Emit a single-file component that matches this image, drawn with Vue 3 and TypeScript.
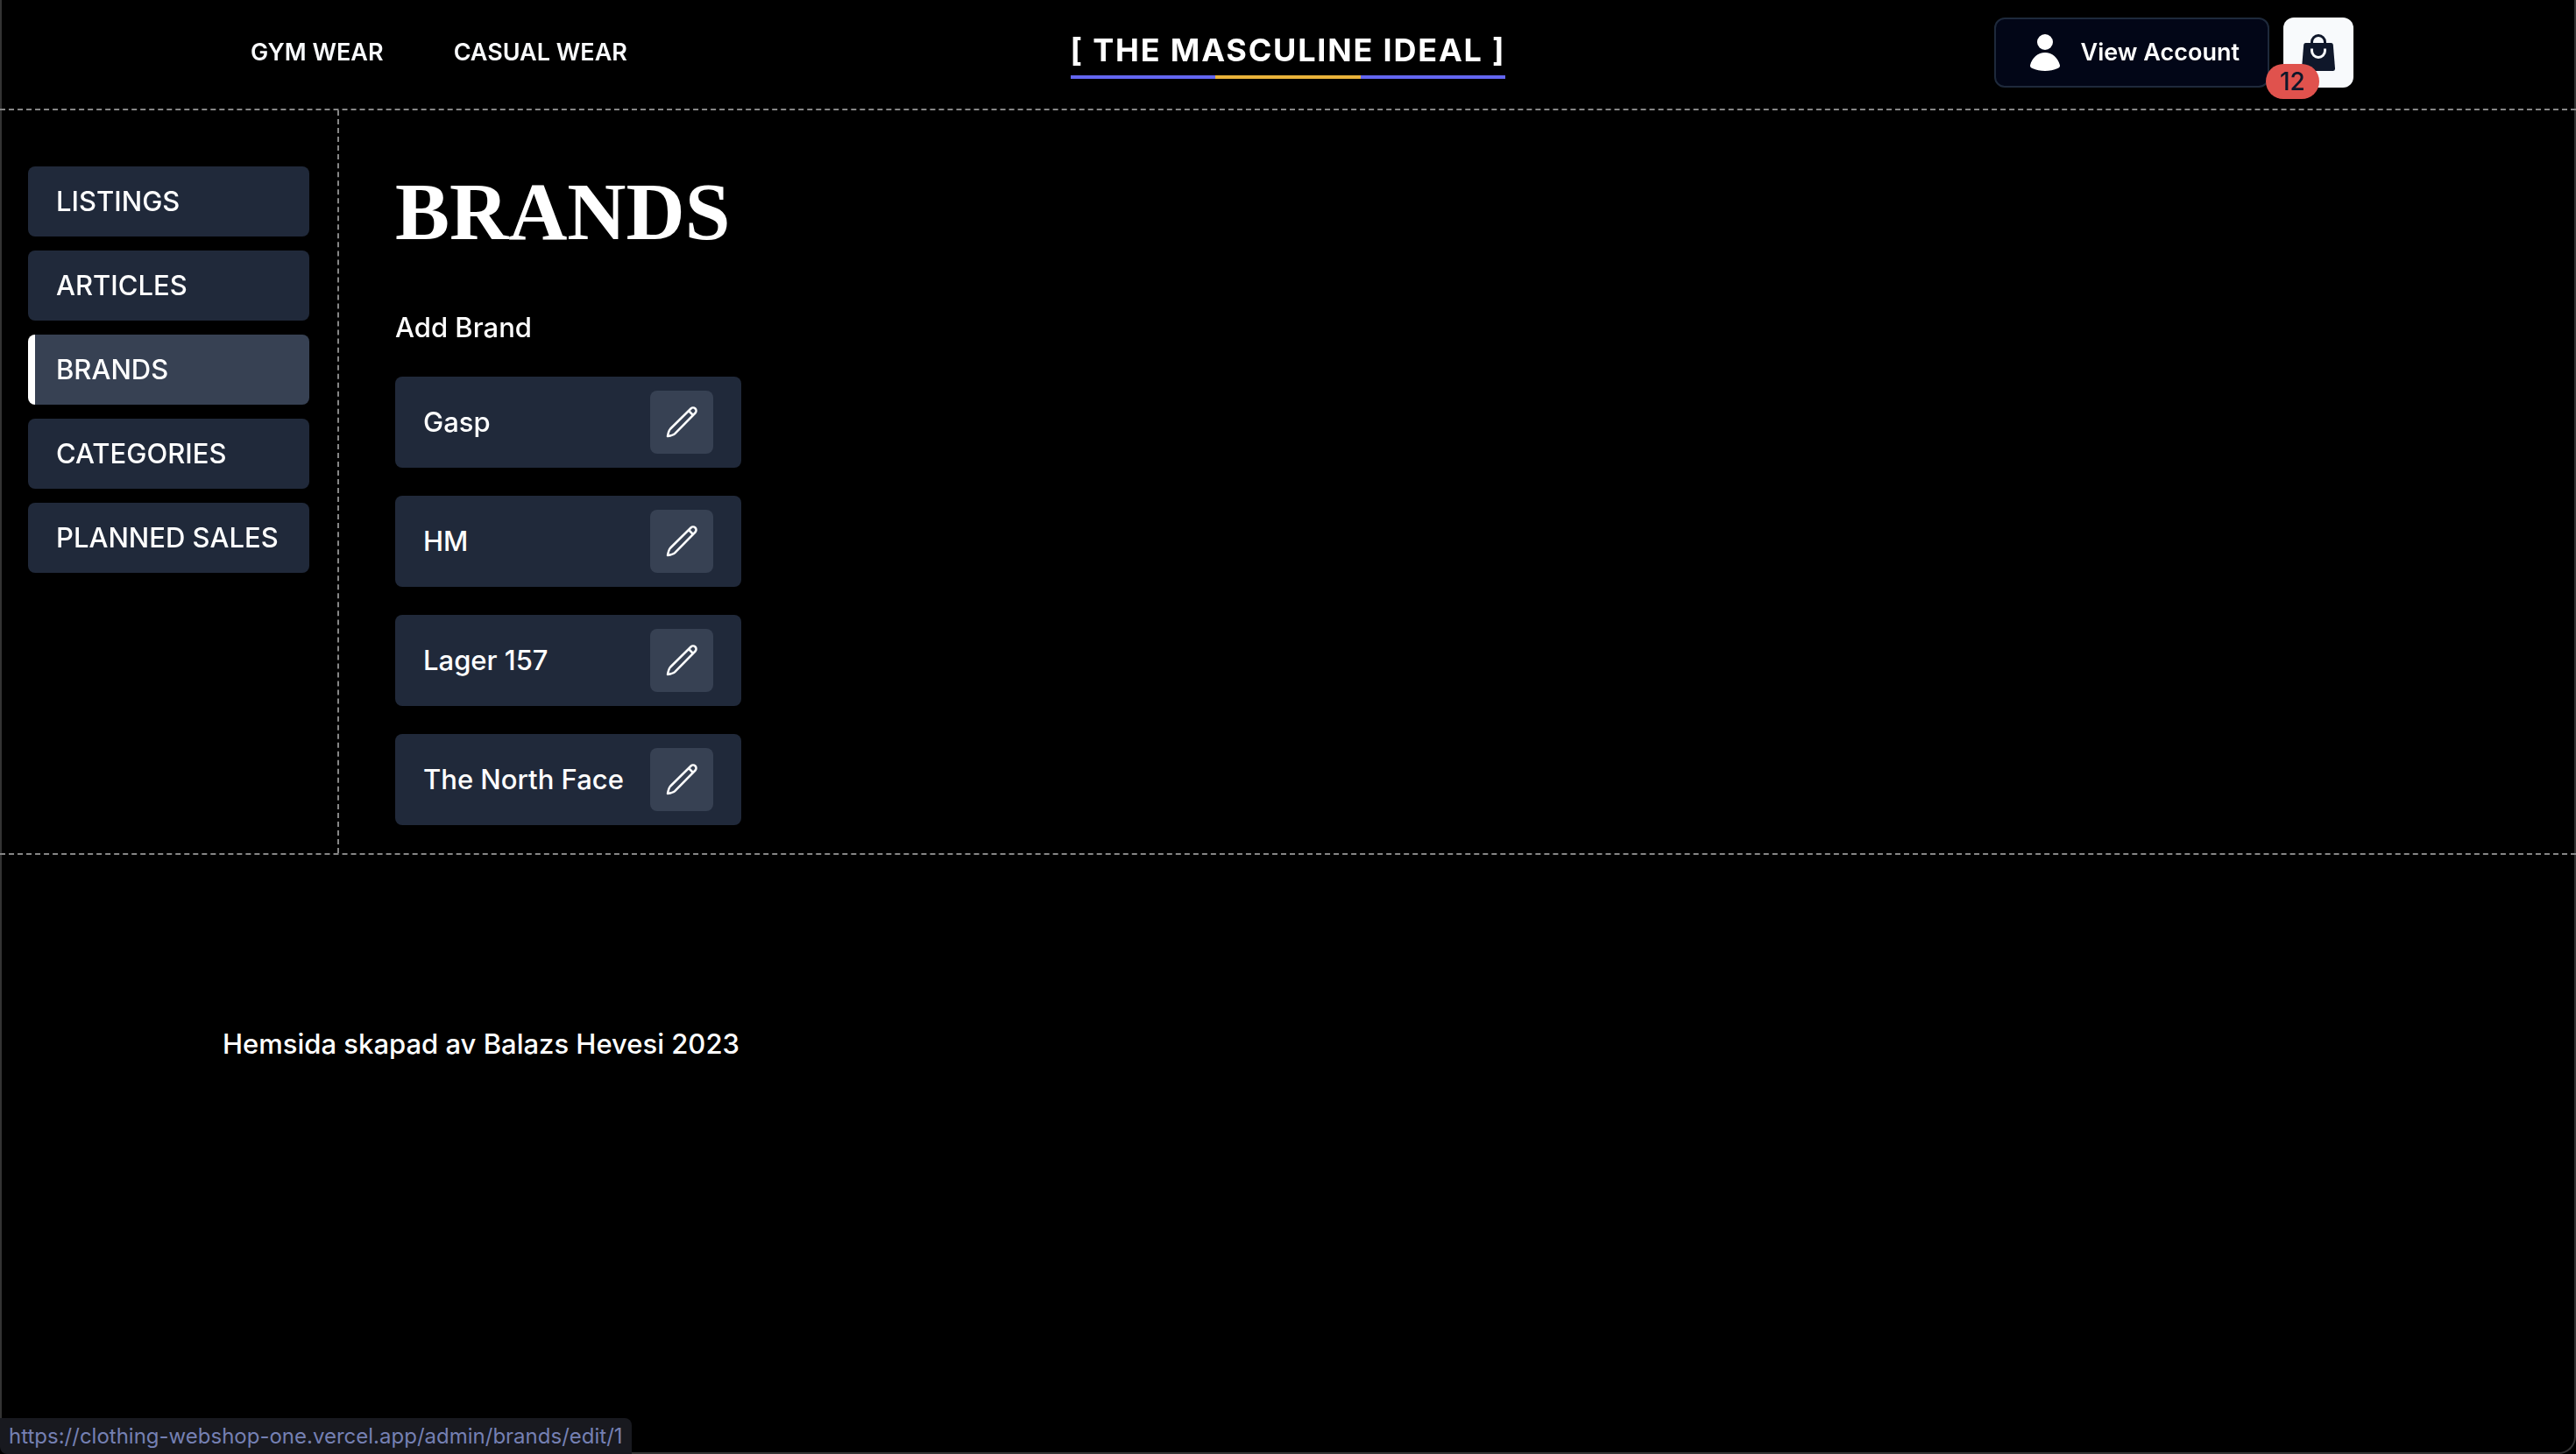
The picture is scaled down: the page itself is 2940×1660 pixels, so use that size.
<script setup lang="ts">
interface AdminLink {
  label: string
  href: string
  active?: boolean
}

interface Brand {
  id: number
  name: string
}

const adminLinks: AdminLink[] = [
  { label: 'LISTINGS', href: '/admin/listings' },
  { label: 'ARTICLES', href: '/admin/articles' },
  { label: 'BRANDS', href: '/admin/brands', active: true },
  { label: 'CATEGORIES', href: '/admin/categories' },
  { label: 'PLANNED SALES', href: '/admin/planned-sales' },
]

const brands: Brand[] = [
  { id: 1, name: 'Gasp' },
  { id: 2, name: 'HM' },
  { id: 3, name: 'Lager 157' },
  { id: 4, name: 'The North Face' },
]

const cartCount = 12
const hoveredUrl = 'https://clothing-webshop-one.vercel.app/admin/brands/edit/1'
</script>

<template>
  <div class="page">
    <div class="window-frame" aria-hidden="true"></div>

    <header class="header">
      <div class="container header-row">
        <nav class="nav" aria-label="Shop">
          <a class="nav-link" href="/gym-wear">GYM WEAR</a>
          <a class="nav-link" href="/casual-wear">CASUAL WEAR</a>
        </nav>
        <a class="logo" href="/">[ THE MASCULINE IDEAL ]</a>
        <div class="actions">
          <button class="account" type="button">
            <svg class="user-icon" viewBox="0 0 34 42" aria-hidden="true">
              <circle cx="17" cy="9" r="9" />
              <path d="M17 21C25 21 32 27 34 35.500C34.200 37 33 38.300 31.500 39C23 43 11 43 2.500 39C1 38.300 -0.200 37 0 35.500C2 27 9 21 17 21Z" />
            </svg>
            View Account
          </button>
          <button class="cart" type="button" :aria-label="`Cart, ${cartCount} items`">
            <svg class="bag-icon" viewBox="0 0 38 42" aria-hidden="true">
              <path d="M11.500 12V9a7.500 7.500 0 0 1 15 0V12" fill="none" stroke="#0f172a" stroke-width="3" />
              <path d="M4.500 10H33.500Q35.500 10 35.800 12L38 39Q38.200 42 35.500 42H2.500Q-0.200 42 0 39L2.200 12Q2.500 10 4.500 10Z" fill="#0f172a" />
              <path d="M11.500 16.500V19a7.500 7.500 0 0 0 15 0V16.500" fill="none" stroke="#f8fafc" stroke-width="3" />
            </svg>
            <span class="badge">{{ cartCount }}</span>
          </button>
        </div>
      </div>
    </header>

    <div class="admin">
      <nav class="sidebar" aria-label="Admin">
        <a
          v-for="link in adminLinks"
          :key="link.href"
          class="side-link"
          :class="{ active: link.active }"
          :href="link.href"
        >{{ link.label }}</a>
      </nav>
      <main class="content">
        <h1 class="title">BRANDS</h1>
        <a class="add" href="/admin/brands/add">Add Brand</a>
        <ul class="brands">
          <li v-for="brand in brands" :key="brand.id" class="brand">
            <span>{{ brand.name }}</span>
            <a class="edit" :href="`/admin/brands/edit/${brand.id}`" :aria-label="`Edit ${brand.name}`">
              <svg class="pencil" viewBox="0 0 36 36" aria-hidden="true">
                <path d="M28.500 2.500L5.200 25.500Q3 28 2 34Q8.200 33 10.500 30.800L33.500 7.500A3.500 3.500 0 0 0 28.500 2.500Z" />
                <path d="M26 5L31 10" />
              </svg>
            </a>
          </li>
        </ul>
      </main>
    </div>

    <footer class="footer">
      <div class="container">Hemsida skapad av Balazs Hevesi 2023</div>
    </footer>

    <div class="status">{{ hoveredUrl }}</div>
  </div>
</template>

<style>
body {
  background: #000;
}
</style>

<style scoped>
.page {
  min-height: 100vh;
  background: #000;
  color: #fff;
  font-family: Inter, 'Liberation Sans', sans-serif;
  font-size: 31px;
  font-weight: 450;
  line-height: 48px;
}

.page * {
  box-sizing: border-box;
}

a {
  color: inherit;
  text-decoration: none;
}

.container {
  max-width: 2560px;
  margin: 0 auto;
  padding: 0 64px;
}

.header {
  position: relative;
  border-bottom: 2px dashed #868686;
}

.header-row {
  display: grid;
  grid-template-columns: 1fr auto 1fr;
  align-items: center;
  padding-top: 20px;
  padding-bottom: 24px;
}

.nav {
  display: flex;
  gap: 16px;
}

.nav-link {
  padding: 0 32px;
  font-size: 27px;
  font-weight: 600;
  line-height: 40px;
  color: #f8fafc;
}

.logo {
  padding-bottom: 2px;
  border-bottom: 4px solid;
  border-image: linear-gradient(to right, #6366f1 33.3%, #eab33a 33.3% 66.6%, #6366f1 66.6%) 1;
  font-size: 36px;
  font-weight: 700;
  line-height: 54px;
  letter-spacing: 0.05em;
}

.actions {
  display: flex;
  justify-content: flex-end;
  gap: 16px;
}

.account {
  display: flex;
  align-items: center;
  gap: 24px;
  height: 80px;
  padding: 0 32px 0 39px;
  border: 2px solid #1e293b;
  border-radius: 12px;
  background: #020617;
  color: #fff;
  font: 600 27px/40px Inter, 'Liberation Sans', sans-serif;
}

.user-icon {
  width: 34px;
  height: 42px;
  fill: #fff;
}

.cart {
  position: relative;
  display: grid;
  place-items: center;
  width: 80px;
  height: 80px;
  padding: 0;
  border: 0;
  border-radius: 12px;
  background: #f8fafc;
}

.bag-icon {
  width: 38px;
  height: 42px;
}

.badge {
  position: absolute;
  top: 53px;
  left: -20px;
  padding: 0 16px;
  border-radius: 20px;
  background: #e0524d;
  color: #0f172a;
  font: 500 28px/40px Inter, 'Liberation Sans', sans-serif;
}

.admin {
  position: relative;
  display: flex;
  border-bottom: 2px dashed #868686;
}

.sidebar {
  display: flex;
  flex: none;
  flex-direction: column;
  gap: 16px;
  width: 387px;
  padding: 64px 32px 32px;
  border-right: 2px dashed #868686;
}

.side-link {
  padding: 16px 32px;
  border-radius: 8px;
  background: #20293a;
  white-space: nowrap;
}

.side-link.active {
  padding-left: 24px;
  border-left: 8px solid #fff;
  background: #374153;
}

.content {
  flex: 1;
  padding: 64px 64px 32px;
}

.title {
  margin: 0 0 56px;
  font: 700 93px/104px 'Liberation Serif', serif;
}

.brands {
  display: flex;
  flex-direction: column;
  gap: 32px;
  width: 395px;
  margin: 32px 0 0;
  padding: 0;
  list-style: none;
}

.brand {
  display: flex;
  align-items: center;
  justify-content: space-between;
  padding: 16px 32px;
  border-radius: 8px;
  background: #20293a;
  white-space: nowrap;
}

.edit {
  display: grid;
  place-items: center;
  width: 72px;
  height: 72px;
  border-radius: 8px;
  background: #374153;
}

.pencil {
  width: 36px;
  height: 36px;
  fill: none;
  stroke: #fff;
  stroke-width: 2.5;
  stroke-linejoin: round;
}

.footer {
  padding: 192px 0;
}

.window-frame {
  position: fixed;
  inset: 0;
  border: 2px solid #333;
  border-top: 0;
  border-radius: 0 0 20px 20px;
  pointer-events: none;
}

.status {
  position: fixed;
  bottom: 0;
  left: 0;
  padding: 0 10px;
  border-radius: 0 8px 0 8px;
  background: #18191f;
  color: #7580b3;
  font-size: 24px;
  font-weight: 400;
  line-height: 41px;
}
</style>
